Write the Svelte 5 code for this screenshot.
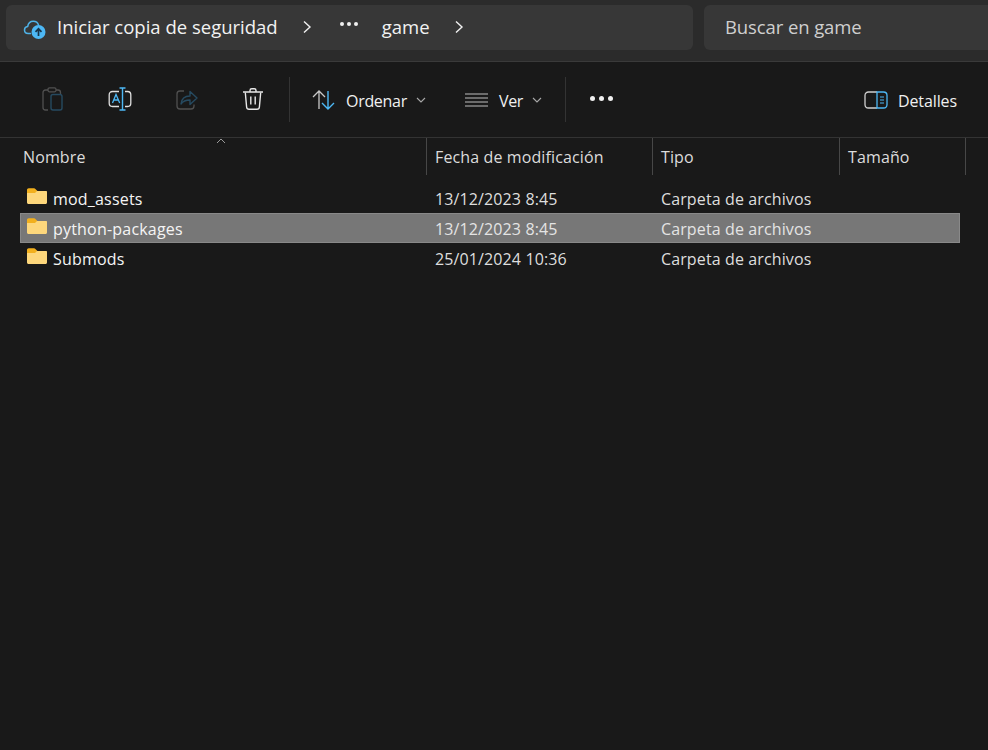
<script>
  const rows = [
    { name: "mod_assets", date: "13/12/2023 8:45", type: "Carpeta de archivos" },
    { name: "python-packages", date: "13/12/2023 8:45", type: "Carpeta de archivos", selected: true },
    { name: "Submods", date: "25/01/2024 10:36", type: "Carpeta de archivos" }
  ];
</script>

<div class="explorer">
  <header class="topbar">
    <div class="breadcrumb">
      <svg class="cloud" width="24" height="24" viewBox="0 0 24 24" fill="none">
        <path d="M7.5 17.5H5.2C3 17.5 1.5 15.9 1.5 14c0-1.9 1.4-3.4 3.2-3.6C5.2 7.4 7.4 5.2 10.3 5.2c2.5 0 4.600 1.600 5.300 3.900" stroke="#4fb3e8" stroke-width="1.500" stroke-linecap="round"/>
        <circle cx="15.500" cy="16" r="7" fill="#4db8f5"/>
        <path d="M15.500 20v-7M12.500 15.800l3-3 3 3" stroke="#17344a" stroke-width="1.700" fill="none"/>
      </svg>
      <span class="crumb first">Iniciar copia de seguridad</span>
      <svg class="chev c1" width="10" height="14" viewBox="0 0 10 14" fill="none"><path d="M2 1.500 8 7l-6 5.500" stroke="#f0f0f0" stroke-width="1.400"/></svg>
      <span class="dots"><i></i><i></i><i></i></span>
      <span class="crumb game">game</span>
      <svg class="chev c2" width="10" height="14" viewBox="0 0 10 14" fill="none"><path d="M2 1.500 8 7l-6 5.500" stroke="#f0f0f0" stroke-width="1.400"/></svg>
    </div>
    <div class="search">Buscar en game</div>
  </header>

  <nav class="toolbar">
    <div class="group icons">
      <svg width="24" height="26" viewBox="0 0 24 26" fill="none">
        <path d="M7 4H4.500C3 4 2 5 2 6.500v15C2 23 3 24 4.500 24H7" stroke="#505050" stroke-width="1.300"/>
        <path d="M15 4h2c1.500 0 2.500 1 2.500 2.500V8" stroke="#505050" stroke-width="1.300"/>
        <rect x="7" y="1.800" width="8" height="4" rx="1.500" stroke="#505050" stroke-width="1.300"/>
        <rect x="10" y="8.500" width="11" height="15.500" rx="2" stroke="#264a60" stroke-width="1.400"/>
      </svg>
      <svg width="24" height="24" viewBox="0 0 24 24" fill="none">
        <path d="M11 4.500H4.500C2.500 4.500 1.200 5.800 1.200 7.700v8.600c0 1.900 1.300 3.200 3.300 3.200H11" stroke="#e0e0e0" stroke-width="1.300"/>
        <path d="M17 4.500h2.500c2 0 3.300 1.300 3.300 3.200v8.600c0 1.900-1.300 3.200-3.300 3.200H17" stroke="#e0e0e0" stroke-width="1.300"/>
        <path d="M11.500 1h6M11.500 23h6M14.500 1v22" stroke="#4db8f5" stroke-width="1.400"/>
        <path d="M4.500 16 8 7.500l3.700 8.500M5.800 13h4.500" stroke="#4db8f5" stroke-width="1.300"/>
      </svg>
      <svg width="24" height="24" viewBox="0 0 24 24" fill="none">
        <path d="M9 4H5C3.300 4 2 5.300 2 7v12c0 1.700 1.300 3 3 3h11c1.700 0 3-1.300 3-3v-1.500" stroke="#505050" stroke-width="1.300"/>
        <path d="M6 17c.5-5 4-8 9-8V4.500l7 6.500-7 6.500V13c-4 0-7 1-9 4Z" stroke="#264a60" stroke-width="1.400" stroke-linejoin="round"/>
      </svg>
      <svg width="22" height="24" viewBox="0 0 22 24" fill="none">
        <path d="M1 5h20M8 4.500V3.500C8 2.500 8.800 1.800 9.800 1.800h2.400c1 0 1.800.7 1.800 1.700v1" stroke="#e8e8e8" stroke-width="1.400"/>
        <path d="M3.300 5.500 4.600 20c.1 1.500 1.100 2.300 2.500 2.300h7.800c1.400 0 2.400-.8 2.500-2.300l1.300-14.500" stroke="#e8e8e8" stroke-width="1.400"/>
        <path d="M8.800 9.500v8M13.200 9.500v8" stroke="#e8e8e8" stroke-width="1.400"/>
      </svg>
    </div>
    <span class="divider"></span>
    <div class="group sort">
      <svg width="24" height="22" viewBox="0 0 24 22" fill="none">
        <path d="M7 20V2M1 8l6-6 6 6" stroke="#c8c8c8" stroke-width="1.300"/>
        <path d="M16 2v18M10 14l6 6 6-6" stroke="#4db8f5" stroke-width="1.400"/>
      </svg>
      <span class="label">Ordenar</span>
      <svg class="caret" width="10" height="6" viewBox="0 0 10 6" fill="none"><path d="M1 1l4 4 4-4" stroke="#a8a8a8" stroke-width="1.100"/></svg>
    </div>
    <div class="group view">
      <svg width="23" height="14" viewBox="0 0 23 14" fill="none">
        <path d="M0 1h23M0 5h23M0 9h23M0 13h23" stroke="#bdbdbd" stroke-width="1.100"/>
      </svg>
      <span class="label">Ver</span>
      <svg class="caret" width="10" height="6" viewBox="0 0 10 6" fill="none"><path d="M1 1l4 4 4-4" stroke="#a8a8a8" stroke-width="1.100"/></svg>
    </div>
    <span class="divider second"></span>
    <span class="more"><i></i><i></i><i></i></span>
    <div class="group details">
      <svg width="24" height="18" viewBox="0 0 24 18" fill="none">
        <path d="M13 1H4.500C2.500 1 1 2.500 1 4.500v9C1 15.500 2.500 17 4.500 17H13" stroke="#d0d0d0" stroke-width="1.300"/>
        <path d="M13 1h6.500C21.500 1 23 2.500 23 4.500v9c0 2-1.500 3.500-3.500 3.500H13Z" stroke="#4db8f5" stroke-width="1.300"/>
        <path d="M16 6h4M16 9h4M16 12h4" stroke="#4db8f5" stroke-width="1.200"/>
      </svg>
      <span class="label">Detalles</span>
    </div>
  </nav>

  <section class="list">
    <span class="sort-arrow">
      <svg width="10" height="6" viewBox="0 0 10 6" fill="none"><path d="M1 5l4-4 4 4" stroke="#9a9a9a" stroke-width="1"/></svg>
    </span>
    <div class="head grid">
      <div>Nombre</div>
      <div>Fecha de modificación</div>
      <div>Tipo</div>
      <div>Tamaño</div>
    </div>
    <div class="rows">
      {#each rows as row}
        <div class="row grid" class:selected={row.selected}>
          <div class="name">
            <svg width="22" height="18" viewBox="0 0 22 18">
              <path d="M1 3c0-1 .7-1.700 1.700-1.700h5.300c.6 0 1 .2 1.400.6L11.500 4H1Z" fill="#f2b01e"/>
              <path d="M1 4h19c.6 0 1 .4 1 1v10.500c0 .8-.7 1.500-1.500 1.500h-17C1.700 17 1 16.300 1 15.500Z" fill="#fdd77c"/>
              <path d="M1 4h10l-2 2H1Z" fill="#f2b01e"/>
            </svg>
            <span>{row.name}</span>
          </div>
          <div>{row.date}</div>
          <div>{row.type}</div>
          <div></div>
        </div>
      {/each}
    </div>
  </section>
</div>

<style>
  :global(body) {
    background: #191919;
  }

  .explorer {
    width: 988px;
    height: 750px;
    overflow: hidden;
    background: #191919;
    color: #f0f0f0;
    font-family: "Open Sans", "Noto Sans", sans-serif;
  }

  .topbar {
    display: flex;
    gap: 11px;
    height: 62px;
    box-sizing: border-box;
    padding: 5px 0 11px 6px;
    background: #2b2b2b;
    border-bottom: 1px solid #3a3a3a;
  }

  .breadcrumb {
    width: 687px;
    display: flex;
    align-items: center;
    padding: 0 0 2px 17px;
    box-sizing: border-box;
    background: #373737;
    border-radius: 6px;
  }

  .cloud {
    margin: 2px 10px 0 0;
  }

  .crumb {
    font-size: 18.5px;
    color: #f2f2f2;
  }

  .c1 {
    margin-left: 24px;
  }

  .dots {
    display: flex;
    gap: 3px;
    margin: -6px 0 0 28px;
  }

  .dots i,
  .more i {
    display: block;
    background: #f0f0f0;
    border-radius: 50%;
  }

  .dots i {
    width: 4px;
    height: 4px;
  }

  .game {
    margin-left: 24px;
  }

  .c2 {
    margin-left: 24px;
  }

  .search {
    flex: 1;
    display: flex;
    align-items: center;
    padding: 0 0 2px 21px;
    background: #373737;
    border-radius: 6px 0 0 6px;
    font-size: 18.5px;
    letter-spacing: -0.1px;
    color: #cfcfcf;
  }

  .toolbar {
    display: flex;
    align-items: center;
    height: 76px;
    box-sizing: border-box;
    border-bottom: 1px solid #333;
    padding-left: 41px;
  }

  .group {
    display: flex;
    align-items: center;
  }

  .icons {
    gap: 43px;
    margin-bottom: 2px;
  }

  .divider {
    width: 1px;
    height: 45px;
    background: #333;
    margin-left: 25px;
  }

  .sort {
    margin-left: 22px;
  }

  .label {
    font-size: 16px;
    letter-spacing: -0.3px;
    color: #f0f0f0;
    margin-left: 10px;
    padding-top: 2px;
  }

  .caret {
    margin-left: 9px;
  }

  .view {
    margin-left: 39px;
  }

  .view .label {
    margin-left: 11px;
  }

  .second {
    margin-left: 23px;
  }

  .more {
    display: flex;
    gap: 4px;
    margin: -2px 0 0 24px;
  }

  .more i {
    width: 5px;
    height: 5px;
  }

  .details {
    margin-left: auto;
    margin-right: 31px;
  }

  .details .label {
    letter-spacing: -0.1px;
  }

  .list {
    position: relative;
    padding-left: 20px;
  }

  .sort-arrow {
    position: absolute;
    left: 216px;
    top: 0;
    line-height: 0;
  }

  .grid {
    display: grid;
    grid-template-columns: 406px 226px 187px 126px;
    font-size: 16px;
    letter-spacing: 0.12px;
  }

  .head {
    height: 37px;
    align-items: center;
    color: #dcdcdc;
  }

  .head > div {
    height: 100%;
    display: flex;
    align-items: center;
    box-sizing: border-box;
    padding: 0 0 0 9px;
    border-right: 1px solid #474747;
    margin-right: -1px;
  }

  .head > div:first-child {
    padding-left: 3px;
  }

  .rows {
    padding-top: 8px;
  }

  .row {
    width: 940px;
    height: 30px;
    box-sizing: border-box;
    padding-top: 2px;
    align-items: center;
    color: #dedede;
  }

  .row > div {
    padding-left: 9px;
  }

  .row > .name {
    display: flex;
    align-items: center;
    gap: 5px;
    padding-left: 6px;
    color: #f4f4f4;
    letter-spacing: 0.2px;
  }

  .name svg {
    margin-top: -6px;
  }

  .selected {
    background: #777;
    box-shadow: inset 0 0 0 1px #898989;
    color: #e4e4e4;
  }

  .selected > .name {
    color: #f4f4f4;
  }
</style>
